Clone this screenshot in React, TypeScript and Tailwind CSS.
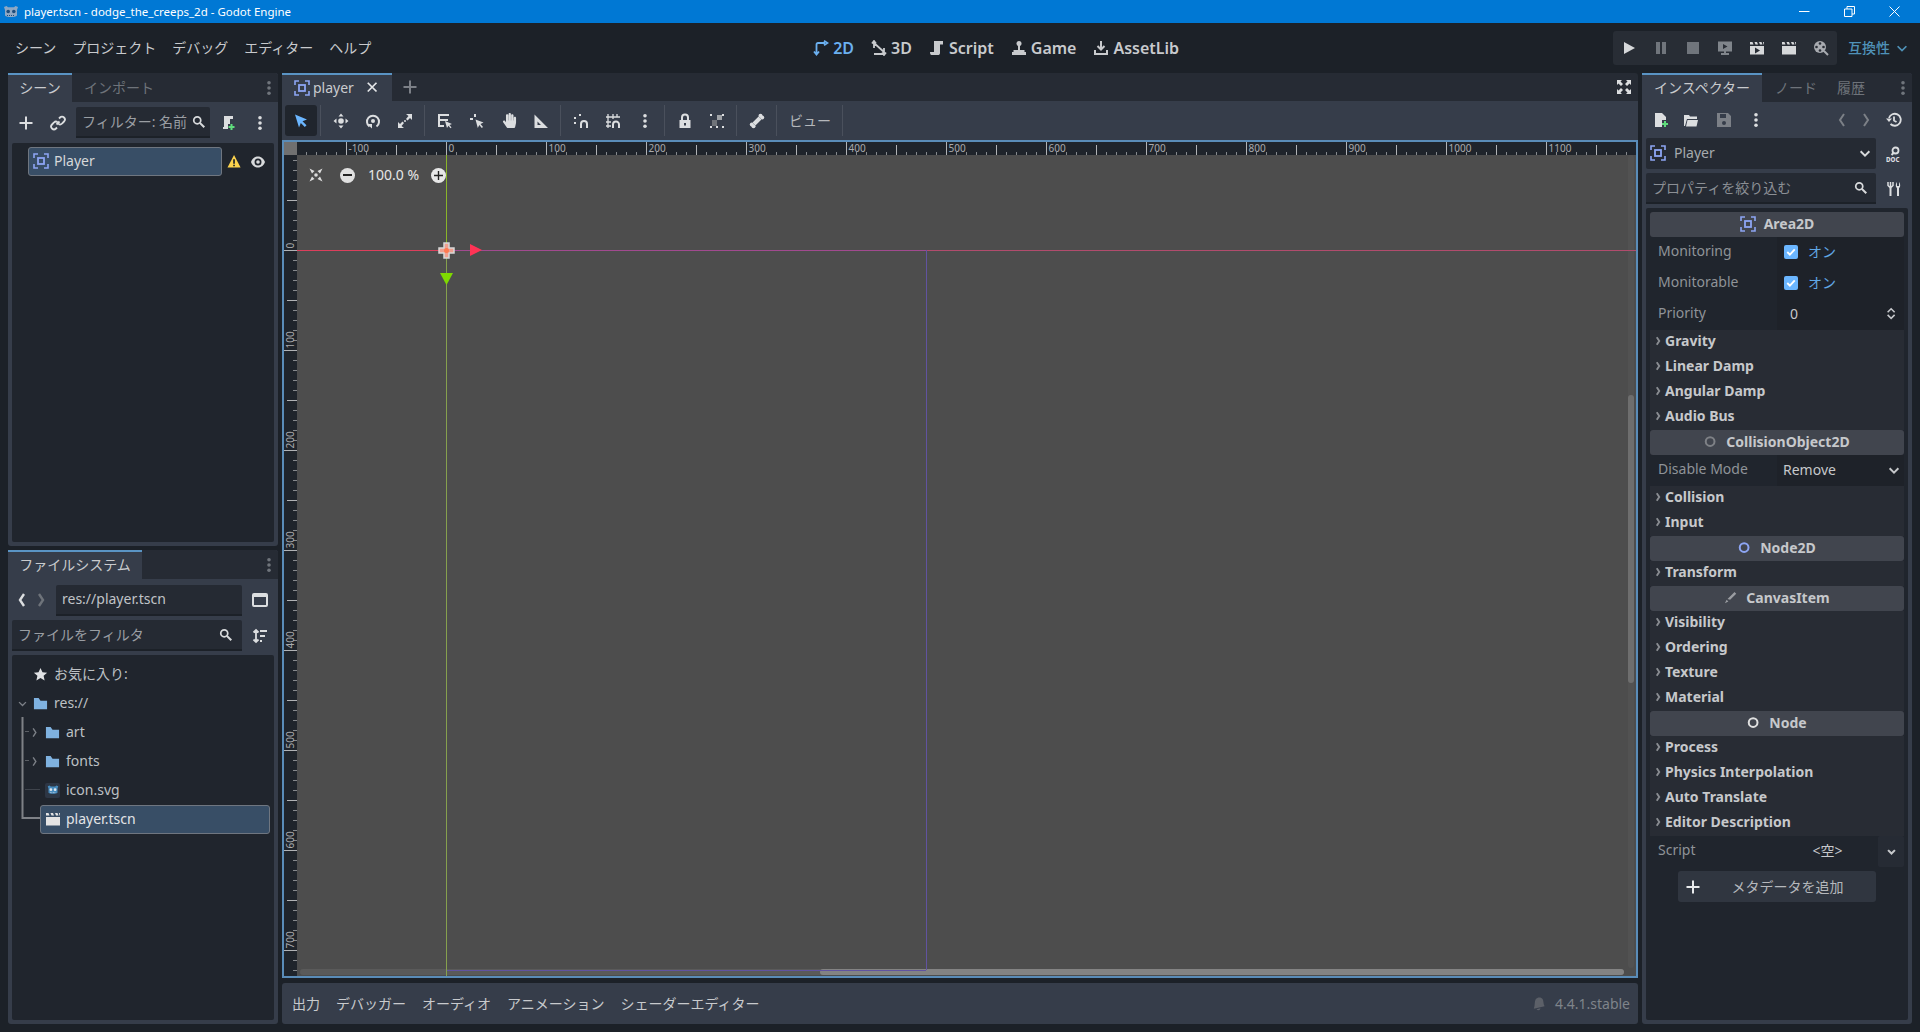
import React from "react";
import { FaHandPaper } from "react-icons/fa";

type IcoProps = { size?: number; className?: string; children?: React.ReactNode };

const Ico: React.FC<IcoProps> = ({ size = 16, className, children }) => (
    <svg viewBox="0 0 16 16" width={size} height={size} className={`shrink-0 ${className ?? ""}`} fill="none">
        {children}
    </svg>
);

const Area2D = ({ size = 16 }: { size?: number }) => (
    <Ico size={size} className="text-[#8da5f3]">
        <path d="M1 5V1h4M11 1h4v4M15 11v4h-4M5 15H1v-4" stroke="currentColor" strokeWidth="1.6" />
        <rect x="5" y="5" width="6" height="6" stroke="currentColor" strokeWidth="1.8" />
    </Ico>
);
const Plus = ({ size = 16 }: { size?: number }) => (
    <Ico size={size}><path d="M8 1.5v13M1.5 8h13" stroke="currentColor" strokeWidth="2" /></Ico>
);
const Dots = ({ className }: { className?: string }) => (
    <Ico className={className}>
        <circle cx="8" cy="2.8" r="1.8" fill="currentColor" />
        <circle cx="8" cy="8" r="1.8" fill="currentColor" />
        <circle cx="8" cy="13.2" r="1.8" fill="currentColor" />
    </Ico>
);
const Search = () => (
    <Ico size={14}>
        <circle cx="6" cy="6" r="4" stroke="currentColor" strokeWidth="2" />
        <path d="M9 9l5 5" stroke="currentColor" strokeWidth="2.4" />
    </Ico>
);
const Chevron = ({ dir = "right", size = 16, width = 2 }: { dir?: "left" | "right" | "down" | "up"; size?: number; width?: number }) => {
    const d = { right: "M6 2l4 6-4 6", left: "M10 2L6 8l4 6", down: "M3 6l5 5 5-5", up: "M3 10l5-5 5 5" }[dir];
    return <Ico size={size}><path d={d} stroke="currentColor" strokeWidth={width} /></Ico>;
};
const Folder = ({ className }: { className?: string }) => (
    <Ico size={15} className={className ?? "text-[#7fb2e0]"}>
        <path d="M1 2h5l2 3h7v9H1z" fill="currentColor" />
    </Ico>
);
const Scroll = () => (
    <Ico>
        <path d="M5 1h9v3.5h-3V13c0 1.5-1 2-2 2H2.5v-3H5zM1 12h3v3H2.5C1.5 15 1 14 1 12z" fill="currentColor" />
    </Ico>
);
const Clapper = ({ play }: { play?: boolean }) => (
    <Ico>
        <path d="M1 6h14v8.5H1z" fill="currentColor" />
        <path d="M1 2h2.5l1 2.5H1zM5.5 2h2.5l1 2.5H6.5zM10 2h2.5l1 2.5H11zM14 2h1v2.5h-.5z" fill="currentColor" />
        {play && <path d="M6 7.5l5 3-5 3z" fill="#282d35" />}
    </Ico>
);
const GodotLogo = ({ size, color, face }: { size: number; color: string; face: string }) => (
    <Ico size={size}>
        <path d="M2 6L1 3l2.5-1L5 3.2h6L12.500 2 15 3l-1 3v5.500c-2 2-10 2-12 0z" fill={color} />
        <circle cx="5.200" cy="7.500" r="1.800" fill={face} />
        <circle cx="10.800" cy="7.500" r="1.800" fill={face} />
        <path d="M4 11.500h8" stroke={face} strokeWidth="1" strokeDasharray="1 1" />
    </Ico>
);
const IconButton: React.FC<{ className?: string; children: React.ReactNode }> = ({ className, children }) => (
    <div className={`flex h-[31px] w-[32px] shrink-0 items-center justify-center ${className ?? ""}`}>{children}</div>
);
const Sep = () => <div className="ml-[3px] mr-[4px] h-[31px] w-px shrink-0 bg-[#4a505c]" />;

const Tab: React.FC<{ active?: boolean; className?: string; children: React.ReactNode }> = ({ active, className, children }) => (
    <div
        className={`flex h-full items-center ${
            active ? "border-t-2 border-[#5a94c4] bg-[#363d4a] text-[#c9cbce]" : "border-t-2 border-transparent text-[#6e737a]"
        } ${className ?? ""}`}
    >
        {children}
    </div>
);

const MenuBar = () => (
    <div className="flex h-[50px] shrink-0 items-center justify-between pl-[7px] pr-2 text-[14px] text-[#c8cacd]">
        <div className="flex">
            {["シーン", "プロジェクト", "デバッグ", "エディター", "ヘルプ"].map((m) => (
                <div key={m} className="px-2">{m}</div>
            ))}
        </div>
        <div className="flex items-center gap-[17px] text-[16px] font-semibold text-[#c8cacd]">
            <div className="flex items-center gap-1 text-[#6bb0f0]">
                <Ico><path d="M3.500 14V4.500C3.500 3.500 4 3 5 3h7M1 11.500L3.500 14.500 6 11.500M11 .8L14.500 3 11 5.300" stroke="currentColor" strokeWidth="1.800" /></Ico>
                2D
            </div>
            <div className="flex items-center gap-1">
                <Ico><path d="M3 14h10M3 3l10 9M3 1v7M13 8v7M1 3.500L3 1l2 2.500M11 12.500L13 15l2-2.500" stroke="currentColor" strokeWidth="1.800" /></Ico>
                3D
            </div>
            <div className="flex items-center gap-1"><Scroll />Script</div>
            <div className="flex items-center gap-1">
                <Ico>
                    <circle cx="8" cy="3.500" r="2.500" fill="currentColor" />
                    <path d="M7 5h2v5h4.500v2H15v3H1v-3h1.500v-2H7z" fill="currentColor" />
                </Ico>
                Game
            </div>
            <div className="flex items-center gap-1">
                <Ico><path d="M8 1v8M4.500 6L8 9.500 11.500 6M2 10v4h12v-4" stroke="currentColor" strokeWidth="2" /></Ico>
                AssetLib
            </div>
        </div>
        <div className="flex items-center">
            <div className="flex h-[34px] w-[224px] items-center justify-center rounded-[3px] bg-[#282d35] text-[#d6d8da]">
                {[
                    <Ico key="p"><path d="M3 2l11 6-11 6z" fill="currentColor" /></Ico>,
                    <Ico key="a" className="text-[#70757c]"><path d="M3 2h4v12H3zM9 2h4v12H9z" fill="currentColor" /></Ico>,
                    <Ico key="s" className="text-[#70757c]"><path d="M2 2h12v12H2z" fill="currentColor" /></Ico>,
                    <Ico key="r" className="text-[#80858b]"><path d="M1 1.500h14v10H9v1.500h3v2H4v-2h3v-1.500H1zM6 4v5l4.500-2.500z" fill="currentColor" fillRule="evenodd" /></Ico>,
                    <Clapper key="c" play />,
                    <Clapper key="d" />,
                    <Ico key="m" className="text-[#a8abb0]">
                        <circle cx="7" cy="7" r="6" fill="currentColor" />
                        <circle cx="7" cy="3.500" r="1.300" fill="#282d35" /><circle cx="7" cy="10.500" r="1.300" fill="#282d35" />
                        <circle cx="3.500" cy="7" r="1.300" fill="#282d35" /><circle cx="10.500" cy="7" r="1.300" fill="#282d35" />
                        <path d="M11 11l4 4" stroke="currentColor" strokeWidth="2" />
                    </Ico>,
                ].map((icon, i) => (
                    <div key={i} className="flex w-[32px] justify-center">{icon}</div>
                ))}
            </div>
            <div className="ml-[11px] flex w-[64px] items-center gap-[5px] font-medium text-[#4f92b8]">
                互換性
                <Chevron dir="down" size={14} />
            </div>
        </div>
    </div>
);

const SceneDock = () => (
    <div className="flex h-[473px] shrink-0 flex-col rounded-[3px] bg-[#363d4a]">
        <div className="flex h-[29px] shrink-0 items-stretch rounded-t-[3px] bg-[#262b34]">
            <Tab active className="w-[64px] justify-center pb-[2px]">シーン</Tab>
            <Tab className="ml-3 w-[70px] pb-[2px]">インポート</Tab>
            <div className="ml-auto flex items-center pr-[1px] text-[#70757c]"><Dots /></div>
        </div>
        <div className="flex h-[41px] shrink-0 items-center px-1 text-[#dcdee0]">
            <div className="flex w-[28px] justify-center"><Plus /></div>
            <div className="ml-[2px] flex w-[32px] justify-center">
                <Ico>
                    <path d="M6.500 9.500l3-3M9 3.500l1-1a2.800 2.800 0 0 1 4 4l-2 2a2.800 2.800 0 0 1-3.500.5M7 12.500l-1 1a2.800 2.800 0 0 1-4-4l2-2A2.800 2.800 0 0 1 7.500 7" stroke="currentColor" strokeWidth="1.800" />
                </Ico>
            </div>
            <div className="ml-[2px] flex h-[31px] w-[134px] shrink-0 items-center overflow-hidden rounded-t-[2px] border-b-2 border-[#1c2128] bg-[#252a33] pl-[6px] pr-1 text-[#9a9ea3]">
                <span className="flex-1 overflow-hidden whitespace-nowrap">フィルター: 名前</span>
                <span className="text-[#d8dadc]"><Search /></span>
            </div>
            <div className="ml-[10px] flex w-[16px] justify-center">
                <Ico>
                    <path d="M4 1h9v3h-3v5H8v5H3v-2h1z" fill="currentColor" />
                    <path d="M11.500 9v6M8.500 12h6" stroke="#5fdc7c" strokeWidth="2" />
                </Ico>
            </div>
            <div className="ml-4 flex w-[16px] justify-center"><Dots /></div>
        </div>
        <div className="mx-1 mb-1 flex-1 rounded-[2px] bg-[#20252d] pt-1">
            <div className="flex items-center pl-4 text-[#c8cacd]">
                <div className="flex h-[29px] w-[194px] items-center gap-[5px] rounded-[3px] border border-[#6f7680] bg-[#384e66] pb-[2px] pl-1 text-[#d6d8da]">
                    <Area2D />
                    Player
                </div>
                <div className="ml-[5px] flex w-[14px] justify-center">
                    <Ico size={15}>
                        <path d="M7.500 1l7 13.500H.5z" fill="#fcd34d" />
                        <path d="M7.500 5.500v5M7.500 11.500v1.500" stroke="#1c2128" strokeWidth="1.800" />
                    </Ico>
                </div>
                <div className="ml-[9px] text-[#d8dadc]">
                    <Ico>
                        <path d="M8 2.500C4.500 2.500 2 5 1 8c1 3 3.500 5.500 7 5.500S14 11 15 8c-1-3-3.500-5.500-7-5.500zM8 4.500a3.500 3.500 0 1 1 0 7 3.500 3.500 0 0 1 0-7z" fill="currentColor" fillRule="evenodd" />
                        <circle cx="8" cy="8" r="1.800" fill="currentColor" />
                    </Ico>
                </div>
            </div>
        </div>
    </div>
);

const FileRow: React.FC<{ className?: string; children: React.ReactNode }> = ({ className, children }) => (
    <div className={`flex h-[29px] items-center pb-[1px] ${className ?? ""}`}>{children}</div>
);

const FileDock = () => (
    <div className="flex min-h-0 flex-1 flex-col rounded-[3px] bg-[#363d4a]">
        <div className="flex h-[29px] shrink-0 items-stretch rounded-t-[3px] bg-[#262b34]">
            <Tab active className="w-[134px] justify-center pb-[2px]">ファイルシステム</Tab>
            <div className="ml-auto flex items-center pr-[1px] text-[#70757c]"><Dots /></div>
        </div>
        <div className="flex h-[41px] shrink-0 items-center pl-[6px] pt-[1px] text-[#dcdee0]">
            <Chevron dir="left" width={2.400} />
            <div className="ml-[3px] text-[#6e737a]"><Chevron width={2.400} /></div>
            <div className="ml-[7px] flex h-[31px] w-[186px] items-center rounded-t-[2px] border-b-2 border-[#1c2128] bg-[#252a33] pl-[6px] text-[#c0c3c7]">res://player.tscn</div>
            <div className="ml-[10px]">
                <Ico><rect x="1" y="2" width="14" height="12" rx="1" stroke="currentColor" strokeWidth="2" /><path d="M1 4h14" stroke="currentColor" strokeWidth="2" /></Ico>
            </div>
        </div>
        <div className="flex h-[31px] shrink-0 items-center pl-1 text-[#dcdee0]">
            <div className="flex h-[31px] w-[230px] items-center rounded-t-[2px] border-b-2 border-[#1c2128] bg-[#252a33] pl-[6px] pr-[9px] text-[#9a9ea3]">
                <span className="flex-1">ファイルをフィルタ</span>
                <span className="text-[#d8dadc]"><Search /></span>
            </div>
            <div className="ml-[10px]">
                <Ico><path d="M4 2v12M1.500 4.500L4 2l2.500 2.500M1.500 11.500L4 14l2.500-2.500M8 3h7M8 8h5M8 13h2" stroke="currentColor" strokeWidth="1.800" /></Ico>
            </div>
        </div>
        <div className="relative mx-1 mb-1 mt-[4px] flex-1 rounded-[2px] bg-[#20252d] pt-[5px] text-[#bcc0c4]">
            <FileRow className="pl-[21px]">
                <Ico size={15} className="text-[#e0e2e4]"><path d="M8 1l2.100 4.600 5 .5-3.800 3.300 1.100 5L8 11.800 3.600 14.400l1.100-5L.9 6.100l5-.5z" fill="currentColor" /></Ico>
                <span className="ml-[6px]">お気に入り:</span>
            </FileRow>
            <FileRow className="pl-[5px]">
                <span className="text-[#7c8087]"><Chevron dir="down" size={11} /></span>
                <span className="ml-[5px]"><Folder /></span>
                <span className="ml-[6px]">res://</span>
            </FileRow>
            <FileRow className="pl-[17px]">
                <span className="text-[#7c8087]"><Chevron size={11} /></span>
                <span className="ml-[5px]"><Folder /></span>
                <span className="ml-[6px]">art</span>
            </FileRow>
            <FileRow className="pl-[17px]">
                <span className="text-[#7c8087]"><Chevron size={11} /></span>
                <span className="ml-[5px]"><Folder /></span>
                <span className="ml-[6px]">fonts</span>
            </FileRow>
            <FileRow className="pl-[33px]">
                <div className="flex h-[15px] w-[15px] items-center justify-center rounded-[2px] bg-[#2d3644]">
                    <GodotLogo size={12} color="#478cbf" face="#e0e6ec" />
                </div>
                <span className="ml-[6px]">icon.svg</span>
            </FileRow>
            <FileRow className="ml-[28px] mr-1 rounded-[3px] border border-[#6f7680] bg-[#384e66] pl-[4px] text-[#e2e4e6]">
                <span className="text-[#e4e4e4]"><Clapper /></span>
                <span className="ml-[5px]">player.tscn</span>
            </FileRow>
            <svg className="absolute left-0 top-0" width="30" height="180" fill="none">
                <path d="M10.500 62v101H28" stroke="#7e8186" strokeWidth="2" />
                <path d="M13 76.500h4M13 105.500h4" stroke="#5a5e64" strokeWidth="1" />
                <path d="M13 134.500h15" stroke="#3f444c" strokeWidth="1" />
            </svg>
        </div>
    </div>
);

const HorizontalRuler = () => {
    const ticks = [];
    for (let u = -140; u <= 1190; u += 10) {
        const x = 149 + u + 0.5;
        const top = u % 100 === 0 ? 0 : u % 50 === 0 ? 3 : 10;
        ticks.push(<path key={u} d={`M${x} ${top}V13`} stroke={u % 50 === 0 ? "#b0b2b5" : "#85888c"} />);
        if (u % 100 === 0)
            ticks.push(<text key={`t${u}`} x={x + 2} y={10} fontSize={10} fill="#a9abae">{u}</text>);
    }
    return <svg width="1339" height="13" className="block flex-1">{ticks}</svg>;
};

const VerticalRuler = () => {
    const ticks = [];
    for (let u = -90; u <= 720; u += 10) {
        const y = 95 + u + 0.5;
        const left = u % 100 === 0 ? 0 : u % 50 === 0 ? 3 : 9;
        ticks.push(<path key={u} d={`M${left} ${y}H13`} stroke={u % 50 === 0 ? "#b0b2b5" : "#85888c"} />);
        if (u % 100 === 0)
            ticks.push(
                <text key={`t${u}`} transform={`translate(10 ${y - 2}) rotate(-90)`} fontSize={10} fill="#a9abae">{u}</text>,
            );
    }
    return <svg width="13" height="821" className="block shrink-0">{ticks}</svg>;
};

const Canvas = () => (
    <div className="relative flex-1 overflow-hidden bg-[#4d4d4d]">
        <div className="absolute bottom-[1px] left-[3px] right-[12px] h-[6px] rounded-full bg-[#5a5a5a]">
            <div className="ml-[520px] h-full rounded-full bg-[#838383]" />
        </div>
        <div className="absolute bottom-[8px] right-[2px] top-0 w-[6px] rounded-full bg-[#525252]">
            <div className="mt-[240px] h-[288px] rounded-full bg-[#6e6e6e]" />
        </div>
        <svg width="1339" height="821" className="absolute left-0 top-0" fill="none">
            <path d="M0 95.500H149" stroke="#dc3f5c" />
            <path d="M149 95.500H629" stroke="#a14a8f" />
            <path d="M629 95.500H1339" stroke="#b14c6d" />
            <path d="M629.500 95V815M149 815.500H629" stroke="#6153a0" />
            <path d="M149.500 0V95" stroke="#8ab52a" />
            <path d="M149.500 95V821" stroke="#86a04e" />
            <path d="M173 89l12 6-12 6z" fill="#ff3355" />
            <path d="M143 118h13l-6.500 12z" fill="#7fd900" />
            <path d="M147 88h5v5h5v5h-5v5h-5v-5h-5v-5h5z" fill="#f0a090" stroke="#d8d8d8" strokeWidth="1.500" />
            <circle cx="149.500" cy="95.500" r="2.500" fill="#ff7a50" />
        </svg>
        <div className="relative flex items-center pl-[11px] pt-[12px] text-[#e6e6e6]">
            <Ico className="text-[#dcdcdc]">
                <path d="M1.500 1.500l5 2.500-2.500 2.500zM14.500 1.500l-5 2.500 2.500 2.500zM1.500 14.500l5-2.500-2.500-2.500zM14.500 14.500l-5-2.500 2.500-2.500z" fill="currentColor" />
                <circle cx="8" cy="8" r="1.800" fill="currentColor" />
            </Ico>
            <div className="ml-[16px] flex h-[15px] w-[15px] items-center justify-center rounded-full bg-[#e0e0e0]">
                <div className="h-[2px] w-[9px] bg-[#222]" />
            </div>
            <span className="ml-[13px] w-[63px] whitespace-nowrap text-[14px]">100.0 %</span>
            <div className="flex h-[15px] w-[15px] items-center justify-center rounded-full bg-[#e8e8e8] text-[#222]">
                <Plus size={11} />
            </div>
        </div>
    </div>
);

const tools = {
    select: <Ico className="text-[#6bb6ff]"><path d="M2 1.500l12 5-4.500 1.800 4 4-1.700 1.700-4-4L6 14.500z" fill="currentColor" /></Ico>,
    move: (
        <Ico>
            <circle cx="8" cy="8" r="2.800" fill="currentColor" />
            <path d="M8 .5l2.500 3h-5zM8 15.500l2.500-3h-5zM.5 8l3-2.500v5zM15.500 8l-3-2.500v5z" fill="currentColor" />
        </Ico>
    ),
    rotate: (
        <Ico>
            <path d="M4.500 13.500A6 6 0 1 1 11.500 13.500" stroke="currentColor" strokeWidth="2" />
            <circle cx="8" cy="8" r="2" fill="currentColor" />
            <path d="M2 11h5v4.500z" fill="currentColor" />
        </Ico>
    ),
    scale: (
        <Ico>
            <path d="M9 1h6v6l-2-2-2.500 2.500-1.500-1.500L11.500 3zM7 15H1V9l2 2 2.500-2.500 1.500 1.500L4.500 13z" fill="currentColor" />
            <circle cx="8" cy="8" r="1" fill="currentColor" />
        </Ico>
    ),
    list: (
        <Ico>
            <path d="M1 1h11v2H3v3h8v2H3v4h4v2H1z" fill="currentColor" />
            <path d="M8 8l7 3-2.500 1 2 2.500-1 .8-2-2.500L10 15z" fill="currentColor" />
        </Ico>
    ),
    pivot: (
        <Ico>
            <path d="M6 1v3M1 6h3" stroke="currentColor" strokeWidth="2" />
            <path d="M6.500 6.500l8 3-3 1.500 2.500 3-1.200 1-2.500-3-1.500 3z" fill="currentColor" />
        </Ico>
    ),
    ruler: <Ico><path d="M1.500 1.500l13.500 13.500H1.500zM4.500 8.500V12h3.500z" fill="currentColor" fillRule="evenodd" /></Ico>,
    snap: (
        <Ico>
            <path d="M8 15v-4a3 3 0 0 1 6 0v4" stroke="currentColor" strokeWidth="2" />
            <path d="M1 4h2v2H1zM6 1h2v2H6zM1 9h2v2H1z" fill="currentColor" />
        </Ico>
    ),
    grid: (
        <Ico>
            <path d="M3 1v14M8 1v5M12 1v3M1 4h14M1 9h5M1 13h5" stroke="currentColor" strokeWidth="1.300" />
            <path d="M8 15v-3.500a3 3 0 0 1 6 0V15" stroke="currentColor" strokeWidth="2" />
        </Ico>
    ),
    lock: (
        <Ico>
            <path d="M5 7V4.500a3 3 0 0 1 6 0V7" stroke="currentColor" strokeWidth="2" />
            <path d="M2.500 7h11v8h-11zM7 10v2.500h2V10z" fill="currentColor" fillRule="evenodd" />
        </Ico>
    ),
    group: (
        <Ico>
            <path d="M8 2h5v5H8z" fill="#a0a3a7" />
            <path d="M3 7h5v6H3z" fill="#70747a" />
            <path d="M1 1h2v2H1zM13 1h2v2h-2zM1 13h2v2H1zM13 13h2v2h-2zM7 13h2v2H7z" fill="currentColor" />
        </Ico>
    ),
    bone: (
        <Ico>
            <path d="M5 11l6-6" stroke="currentColor" strokeWidth="4" />
            <circle cx="11.500" cy="2.800" r="2" fill="currentColor" /><circle cx="13.200" cy="4.500" r="2" fill="currentColor" />
            <circle cx="2.800" cy="11.500" r="2" fill="currentColor" /><circle cx="4.500" cy="13.200" r="2" fill="currentColor" />
        </Ico>
    ),
};

const ViewPort = () => (
    <div className="flex min-h-0 flex-1 flex-col">
        <div className="flex h-[28px] shrink-0 items-stretch rounded-t-[3px] bg-[#262b34]">
            <Tab active className="w-[110px] pl-3 text-[#aeb2b7]">
                <Area2D />
                <span className="ml-[3px] w-[53px]">player</span>
                <Ico size={14} className="text-[#e4e6e8]"><path d="M2 2l10 10M12 2L2 12" stroke="currentColor" strokeWidth="2" /></Ico>
            </Tab>
            <div className="ml-[10px] flex items-center text-[#7c8087]"><Plus /></div>
            <div className="ml-auto mr-[6px] flex items-center text-[#dcdee0]">
                <Ico><path d="M1 1h5L4.500 2.500 7 5 5 7 2.500 4.500 1 6zM15 1v5l-1.500-1.500L11 7 9 5l2.500-2.500L10 1zM1 15v-5l1.500 1.500L5 9l2 2-2.500 2.500L6 15zM15 15h-5l1.500-1.500L9 11l2-2 2.500 2.500L15 10z" fill="currentColor" /></Ico>
            </div>
        </div>
        <div className="flex h-[39px] shrink-0 items-center bg-[#363d4a] pl-[3px] text-[#dcdee0]">
            <IconButton className="w-[30px] rounded-[3px] bg-[#20252d]">{tools.select}</IconButton>
            <Sep />
            <IconButton>{tools.move}</IconButton>
            <IconButton>{tools.rotate}</IconButton>
            <IconButton>{tools.scale}</IconButton>
            <Sep />
            <IconButton>{tools.list}</IconButton>
            <IconButton>{tools.pivot}</IconButton>
            <IconButton><FaHandPaper size={15} /></IconButton>
            <IconButton>{tools.ruler}</IconButton>
            <Sep />
            <IconButton>{tools.snap}</IconButton>
            <IconButton>{tools.grid}</IconButton>
            <IconButton><Dots /></IconButton>
            <Sep />
            <IconButton>{tools.lock}</IconButton>
            <IconButton>{tools.group}</IconButton>
            <Sep />
            <IconButton>{tools.bone}</IconButton>
            <Sep />
            <div className="w-[58px] text-center text-[#b5b8bc]">ビュー</div>
            <Sep />
        </div>
        <div className="flex min-h-0 flex-1 flex-col border-2 border-[#5a8cb8] bg-[#1f242b]">
            <div className="flex h-[13px] shrink-0">
                <div className="h-full w-[13px] shrink-0 bg-[#707070]" />
                <HorizontalRuler />
            </div>
            <div className="flex min-h-0 flex-1">
                <VerticalRuler />
                <Canvas />
            </div>
        </div>
        <div className="mt-[5px] flex h-[41px] shrink-0 items-center rounded-[3px] bg-[#363d4a] pl-[2px] pr-2 text-[#c8cacd]">
            {["出力", "デバッガー", "オーディオ", "アニメーション", "シェーダーエディター"].map((t) => (
                <div key={t} className="px-2">{t}</div>
            ))}
            <div className="ml-auto flex items-center gap-[9px] text-[#7f848a]">
                <Ico size={15} className="text-[#5c6068]"><path d="M5 3.500C7 1 11 1 12.500 3.500c1 2 .5 5 2 7.500L3 13.500C4.500 10 3.500 6 5 3.500zM6 14l4-1c0 2-3 3-4 1z" fill="currentColor" /></Ico>
                4.4.1.stable
            </div>
        </div>
    </div>
);

const SectionHeader: React.FC<{ icon: React.ReactNode; title: string }> = ({ icon, title }) => (
    <div className="flex h-[25px] items-center justify-center gap-2 rounded-[3px] bg-[#41454e] pb-[2px] font-bold text-[#c6c8cb]">
        {icon}
        {title}
    </div>
);
const Group = ({ title }: { title: string }) => (
    <div className="flex h-[25px] items-center bg-[#282c34] pb-[3px] pl-[3px] font-bold text-[#c6c8cb]">
        <span className="w-[12px] text-[#8a8d92]"><Chevron size={10} width={3} /></span>
        {title}
    </div>
);
const Prop: React.FC<{ name: string; children: React.ReactNode }> = ({ name, children }) => (
    <div className="flex h-[31px] items-center text-[#8f9398]">
        <div className="w-[127px] pb-[3px] pl-2">{name}</div>
        <div className="flex h-full flex-1 items-center bg-[#1e2229] pb-[2px] text-[#c6c8cb]">{children}</div>
    </div>
);
const Check = () => (
    <div className="flex items-center text-[#61a8e6]">
        <div className="ml-[7px] flex h-[14px] w-[14px] items-center justify-center rounded-[2px] bg-[#6bb6ff] text-white">
            <Ico size={12}><path d="M3 8l3.500 3.500L13 4.500" stroke="currentColor" strokeWidth="2.500" /></Ico>
        </div>
        <span className="ml-[10px]">オン</span>
    </div>
);
const Ring = ({ color }: { color: string }) => (
    <Ico size={14}><circle cx="7" cy="7.500" r="5" stroke={color} strokeWidth="2.300" /></Ico>
);

const Inspector = () => (
    <div className="flex h-full w-[270px] shrink-0 flex-col rounded-[3px] bg-[#363d4a]">
        <div className="flex h-[29px] shrink-0 items-stretch rounded-t-[3px] bg-[#262b34]">
            <Tab active className="w-[120px] justify-center pb-[2px]">インスペクター</Tab>
            <Tab className="ml-[13px] w-[62px] pb-[2px]">ノード</Tab>
            <Tab className="pb-[2px]">履歴</Tab>
            <div className="ml-auto flex items-center pr-[1px] text-[#70757c]"><Dots /></div>
        </div>
        <div className="flex h-[36px] shrink-0 items-center pl-[11px] text-[#dcdee0]">
            <div className="w-[30px]">
                <Ico>
                    <path d="M2 1h7l4 4v3H9v7H2z" fill="currentColor" />
                    <path d="M12 9v6M9 12h6" stroke="#5fdc7c" strokeWidth="2" />
                </Ico>
            </div>
            <div className="w-[33px]">
                <Ico><path d="M1 3h5l1 1.500h7V7H4L2 14H1zM4.500 8H15l-1.500 6.500H3z" fill="currentColor" /></Ico>
            </div>
            <div className="w-[32px] text-[#7c8087]">
                <Ico><path d="M1 1h11l3 3v11H1zM4 2v4h6V2zM8 9a2 2 0 1 0 0 4 2 2 0 0 0 0-4z" fill="currentColor" fillRule="evenodd" /></Ico>
            </div>
            <Dots />
            <div className="ml-[70px] text-[#7c8087]"><Chevron dir="left" /></div>
            <div className="ml-2 text-[#7c8087]"><Chevron /></div>
            <div className="ml-[12px]">
                <Ico><path d="M3 6a6 6 0 1 1 1.500 6M8 4.500V8.500l2.500 1.500" stroke="currentColor" strokeWidth="1.800" /><path d="M0 6.500h6L3 10z" fill="currentColor" /></Ico>
            </div>
        </div>
        <div className="flex h-[31px] shrink-0 items-center pl-1">
            <div className="flex h-full w-[230px] items-center rounded-[2px] bg-[#252a33] pb-[2px] pl-1 pr-[4px] text-[#a6aaae]">
                <Area2D />
                <span className="ml-[8px] flex-1">Player</span>
                <span className="text-[#d8dadc]"><Chevron dir="down" size={14} width={2.200} /></span>
            </div>
            <div className="ml-[10px] text-[#dcdee0]">
                <Ico>
                    <circle cx="9.500" cy="4.500" r="3" stroke="currentColor" strokeWidth="1.800" />
                    <path d="M7.500 7L5.500 9" stroke="currentColor" strokeWidth="2" />
                    <text x="0" y="15.500" fontSize="6.200" fontWeight="800" fill="currentColor">DOC</text>
                </Ico>
            </div>
        </div>
        <div className="mt-1 flex h-[31px] shrink-0 items-center pl-1">
            <div className="flex h-full w-[230px] items-center rounded-t-[2px] border-b-2 border-[#1c2128] bg-[#252a33] pl-[6px] pr-[8px] text-[#8b8f95]">
                <span className="flex-1">プロパティを絞り込む</span>
                <span className="text-[#d8dadc]"><Search /></span>
            </div>
            <div className="ml-[10px] text-[#dcdee0]">
                <Ico>
                    <path d="M4.500 1v5M2 1v3.500L4.500 7 7 4.500V1" stroke="currentColor" strokeWidth="1.500" />
                    <path d="M3.500 7h2v8h-2zM11 1c-1 1-1.500 3-1 5l1 1v8h2V7l1-1c.5-2 0-4-1-5v4h-2z" fill="currentColor" />
                </Ico>
            </div>
        </div>
        <div className="mx-1 mb-1 mt-1 flex-1 rounded-[2px] bg-[#20252d] px-1 pt-1">
            <SectionHeader icon={<Area2D />} title="Area2D" />
            <Prop name="Monitoring"><Check /></Prop>
            <Prop name="Monitorable"><Check /></Prop>
            <Prop name="Priority">
                <span className="ml-[13px] flex-1 text-[#c6c8cb]">0</span>
                <span className="mr-[5px]">
                    <Ico size={14}><path d="M3 6l4-4 4 4M3 9l4 4 4-4" stroke="currentColor" strokeWidth="1.800" /></Ico>
                </span>
            </Prop>
            {["Gravity", "Linear Damp", "Angular Damp", "Audio Bus"].map((g) => <Group key={g} title={g} />)}
            <SectionHeader icon={<Ring color="#7e8186" />} title="CollisionObject2D" />
            <Prop name="Disable Mode">
                <span className="ml-[6px] flex-1">Remove</span>
                <span className="mr-[3px]"><Chevron dir="down" size={14} width={2.200} /></span>
            </Prop>
            {["Collision", "Input"].map((g) => <Group key={g} title={g} />)}
            <SectionHeader icon={<Ring color="#8da5f3" />} title="Node2D" />
            <Group title="Transform" />
            <SectionHeader
                icon={<Ico size={14} className="text-[#9a9da2]"><path d="M12 1l2 2-7 7-3-1zM3 10l2 2-4 2z" fill="currentColor" /></Ico>}
                title="CanvasItem"
            />
            {["Visibility", "Ordering", "Texture", "Material"].map((g) => <Group key={g} title={g} />)}
            <SectionHeader icon={<Ring color="#e0e0e0" />} title="Node" />
            {["Process", "Physics Interpolation", "Auto Translate", "Editor Description"].map((g) => <Group key={g} title={g} />)}
            <div className="flex h-[31px] items-center text-[#8f9398]">
                <div className="w-[127px] pb-[3px] pl-2">Script</div>
                <div className="flex-1 pb-[2px] text-center text-[#c6c8cb]">&lt;空&gt;</div>
                <div className="flex h-full w-[26px] items-center justify-center rounded-[2px] bg-[#262b34] text-[#c6c8cb]">
                    <Chevron dir="down" size={11} width={3} />
                </div>
            </div>
            <div className="ml-7 mt-1 flex h-[31px] w-[198px] items-center rounded-[3px] bg-[#303640] pl-[7px] text-[#b5b8bc]">
                <span className="text-[#e8eaec]"><Plus /></span>
                <span className="flex-1 pr-[2px] text-center">メタデータを追加</span>
            </div>
        </div>
    </div>
);

const App: React.FC = () => (
    <div className="flex h-[1032px] w-[1920px] flex-col overflow-hidden bg-[#1c2128] text-[14px] leading-none [font-family:'Noto_Sans','Noto_Sans_CJK_JP',sans-serif]">
        <div className="flex h-[23px] shrink-0 items-center bg-[#0078d4] pl-[3px] text-[11.5px] text-white">
            <GodotLogo size={16} color="#8fa8c4" face="#1d4d7c" />
            <span className="ml-[5px]">player.tscn - dodge_the_creeps_2d - Godot Engine</span>
            <div className="ml-auto flex items-center pr-[20px] text-white">
                <svg width="11" height="11" viewBox="0 0 11 11" fill="none"><path d="M0 5.500h10.500" stroke="currentColor" /></svg>
                <svg width="11" height="11" viewBox="0 0 11 11" fill="none" className="ml-[34px]"><path d="M.5 3h7.500v7.500H.5zM3 3V.5h7.500V8H8" stroke="currentColor" /></svg>
                <svg width="11" height="11" viewBox="0 0 11 11" fill="none" className="ml-[34px]"><path d="M.5.5l10 10M10.500.5l-10 10" stroke="currentColor" /></svg>
            </div>
        </div>
        <MenuBar />
        <div className="flex min-h-0 flex-1 gap-1 px-2 pb-2">
            <div className="flex w-[270px] shrink-0 flex-col gap-1">
                <SceneDock />
                <FileDock />
            </div>
            <ViewPort />
            <Inspector />
        </div>
    </div>
);

export default App;
